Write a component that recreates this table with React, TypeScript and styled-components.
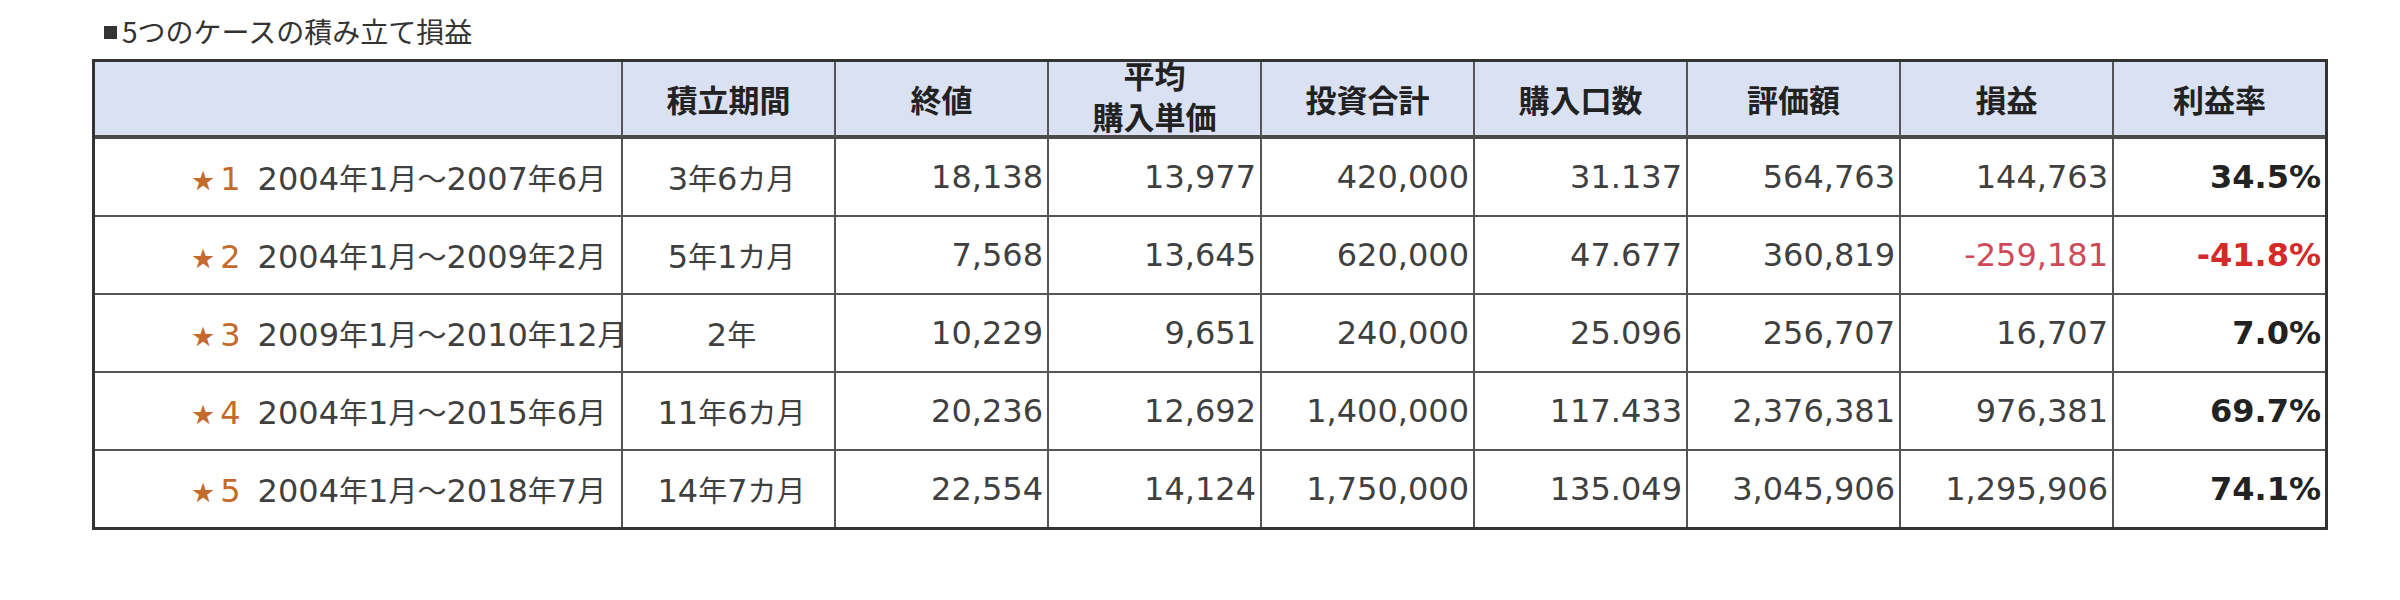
import React from 'react'
import styled, { createGlobalStyle } from 'styled-components'

const GlobalStyle = createGlobalStyle`
  body {
    margin: 0;
    background: #fff;
  }
`

const Page = styled.div`
  width: 2400px;
  height: 600px;
  box-sizing: border-box;
  padding: 12px 0 0 92px;
  font-family: "DejaVu Sans", "Noto Sans CJK JP", sans-serif;
  color: #404040;
`

const Title = styled.h2`
  display: flex;
  align-items: center;
  margin: 0 0 9px 12px;
  font-family: "Noto Sans CJK JP", sans-serif;
  font-weight: 400;
  font-size: 28px;
  line-height: 38px;
  color: #333;
`

const Square = styled.span`
  display: inline-block;
  width: 13px;
  height: 13px;
  margin: 2px 5px 0 0;
  background: #333;
`

const Table = styled.table`
  width: 2236px;
  table-layout: fixed;
  border-collapse: separate;
  border-spacing: 0;
  border: 3px solid #333;
`

const HeadCell = styled.th`
  height: 73px;
  padding: 0;
  background: #d9e1f2;
  border-bottom: 4px solid #4a4a4a;
  border-right: 2px solid #555;
  font-family: "Noto Sans CJK JP", sans-serif;
  font-weight: 700;
  font-size: 31px;
  line-height: 40px;
  color: #222;
  text-align: center;
  vertical-align: middle;

  &:last-child {
    border-right: 0;
  }
`

const TwoLine = styled.span`
  display: block;
  line-height: 41px;
  margin: -15px 0 -7px;
`

const Row = styled.tr`
  &:last-child td {
    border-bottom: 0;
  }
`

type Align = 'left' | 'center' | 'right'
type Tone = 'normal' | 'loss' | 'rate' | 'lossRate'

const toneColor: Record<Tone, string> = {
  normal: '#404040',
  loss: '#cf4a58',
  rate: '#222',
  lossRate: '#d42a2a',
}

const Cell = styled.td<{ $align?: Align; $tone?: Tone }>`
  height: 76px;
  padding: 0 4px 0 10px;
  border-bottom: 2px solid #555;
  border-right: 2px solid #555;
  font-size: 32px;
  white-space: nowrap;
  vertical-align: middle;
  text-align: ${({ $align }) => $align || 'right'};
  color: ${({ $tone }) => toneColor[$tone || 'normal']};
  font-weight: ${({ $tone }) => ($tone === 'rate' || $tone === 'lossRate' ? 700 : 400)};

  &:last-child {
    border-right: 0;
  }
`

const CaseCell = styled(Cell)`
  padding-left: 96px;
  overflow: visible;
`

const Kanji = styled.span`
  font-family: "Noto Sans CJK JP", sans-serif;
  font-size: 29px;
`

const Badge = styled.span`
  color: #c46a2c;
  margin-right: 17px;
`

const Star = styled.span`
  font-size: 27px;
  margin-right: 5px;
`

// wrap the Japanese runs so that they sit a little smaller than the digits
const mixed = (text: string) =>
  text.split(/([\u3000-\u9fff\uff00-\uffef]+)/).map((part, i) =>
    /[\u3000-\u9fff\uff00-\uffef]/.test(part) ? <Kanji key={i}>{part}</Kanji> : part,
  )

type CaseRow = {
  no: number
  span: string
  term: string
  last: string
  avg: string
  total: string
  units: string
  value: string
  profit: string
  rate: string
  loss?: boolean
}

const rows: CaseRow[] = [
  { no: 1, span: '2004年1月～2007年6月', term: '3年6カ月', last: '18,138', avg: '13,977', total: '420,000', units: '31.137', value: '564,763', profit: '144,763', rate: '34.5%' },
  { no: 2, span: '2004年1月～2009年2月', term: '5年1カ月', last: '7,568', avg: '13,645', total: '620,000', units: '47.677', value: '360,819', profit: '-259,181', rate: '-41.8%', loss: true },
  { no: 3, span: '2009年1月～2010年12月', term: '2年', last: '10,229', avg: '9,651', total: '240,000', units: '25.096', value: '256,707', profit: '16,707', rate: '7.0%' },
  { no: 4, span: '2004年1月～2015年6月', term: '11年6カ月', last: '20,236', avg: '12,692', total: '1,400,000', units: '117.433', value: '2,376,381', profit: '976,381', rate: '69.7%' },
  { no: 5, span: '2004年1月～2018年7月', term: '14年7カ月', last: '22,554', avg: '14,124', total: '1,750,000', units: '135.049', value: '3,045,906', profit: '1,295,906', rate: '74.1%' },
]

const widths = [528, 213, 213, 213, 213, 213, 213, 213, 211]

export default function App() {
  return (
    <>
      <GlobalStyle />
      <Page>
        <Title>
          <Square />
          5つのケースの積み立て損益
        </Title>
        <Table>
          <colgroup>
            {widths.map((w, i) => (
              <col key={i} style={{ width: w }} />
            ))}
          </colgroup>
          <thead>
            <tr>
              <HeadCell />
              <HeadCell>積立期間</HeadCell>
              <HeadCell>終値</HeadCell>
              <HeadCell>
                <TwoLine>
                  平均
                  <br />
                  購入単価
                </TwoLine>
              </HeadCell>
              <HeadCell>投資合計</HeadCell>
              <HeadCell>購入口数</HeadCell>
              <HeadCell>評価額</HeadCell>
              <HeadCell>損益</HeadCell>
              <HeadCell>利益率</HeadCell>
            </tr>
          </thead>
          <tbody>
            {rows.map((r) => (
              <Row key={r.no}>
                <CaseCell $align="left">
                  <Badge>
                    <Star>★</Star>
                    {r.no}
                  </Badge>
                  {mixed(r.span)}
                </CaseCell>
                <Cell $align="center">{mixed(r.term)}</Cell>
                <Cell>{r.last}</Cell>
                <Cell>{r.avg}</Cell>
                <Cell>{r.total}</Cell>
                <Cell>{r.units}</Cell>
                <Cell>{r.value}</Cell>
                <Cell $tone={r.loss ? 'loss' : 'normal'}>{r.profit}</Cell>
                <Cell $tone={r.loss ? 'lossRate' : 'rate'}>{r.rate}</Cell>
              </Row>
            ))}
          </tbody>
        </Table>
      </Page>
    </>
  )
}
